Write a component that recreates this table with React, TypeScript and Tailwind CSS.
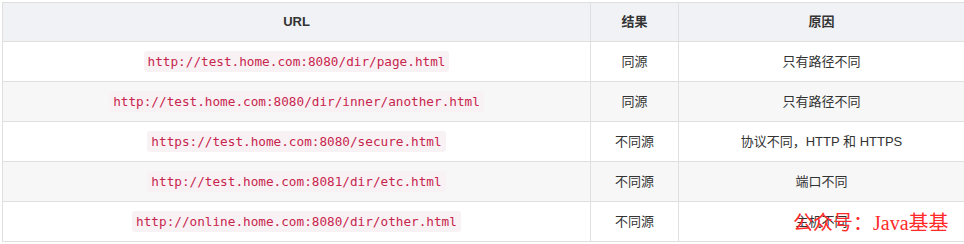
import React from 'react';

const rows = [
    { url: 'http://test.home.com:8080/dir/page.html', result: '同源', reason: '只有路径不同' },
    { url: 'http://test.home.com:8080/dir/inner/another.html', result: '同源', reason: '只有路径不同' },
    { url: 'https://test.home.com:8080/secure.html', result: '不同源', reason: '协议不同，HTTP 和 HTTPS' },
    { url: 'http://test.home.com:8081/dir/etc.html', result: '不同源', reason: '端口不同' },
    { url: 'http://online.home.com:8080/dir/other.html', result: '不同源', reason: '主机不同' },
];

const App: React.FC = () => {
    return (
        <div className="relative w-[964px] h-[244px] bg-white pt-[2px] pl-[2px] font-['Liberation_Sans','Noto_Sans_CJK_SC',sans-serif] text-[13px] text-[#333]">
            <table className="w-[962px] border-collapse table-fixed">
                <colgroup>
                    <col className="w-[588px]" />
                    <col className="w-[88px]" />
                    <col className="w-[286px]" />
                </colgroup>
                <thead>
                    <tr className="h-[39px] bg-[#f0f2f5]">
                        <th className="border border-[#dfdfdf] font-bold text-center p-0">URL</th>
                        <th className="border border-[#dfdfdf] font-bold text-center p-0">结果</th>
                        <th className="border border-[#dfdfdf] font-bold text-center p-0">原因</th>
                    </tr>
                </thead>
                <tbody>
                    {rows.map((r, i) => (
                        <tr key={i} className={i % 2 === 1 ? 'h-[40px] bg-[#f7f7f7]' : 'h-[40px] bg-white'}>
                            <td className="border border-[#dfdfdf] text-center p-0">
                                <code className="inline-block rounded-[3px] bg-[#f9f2f4] px-[4px] py-[2px] leading-[17px] text-[#c7254e] text-[12.7px] font-['DejaVu_Sans_Mono',monospace]">
                                    {r.url}
                                </code>
                            </td>
                            <td className="border border-[#dfdfdf] text-center p-0">{r.result}</td>
                            <td className="border border-[#dfdfdf] text-center p-0">{r.reason}</td>
                        </tr>
                    ))}
                </tbody>
            </table>

            {/* watermark */}
            <div className="absolute left-[793px] top-[211px] text-[20px] leading-[24px] text-[#ff2a2a] font-['Liberation_Serif','Noto_Sans_CJK_SC',serif] whitespace-nowrap">
                公众号：Java基基
            </div>
        </div>
    );
};

export default App;
